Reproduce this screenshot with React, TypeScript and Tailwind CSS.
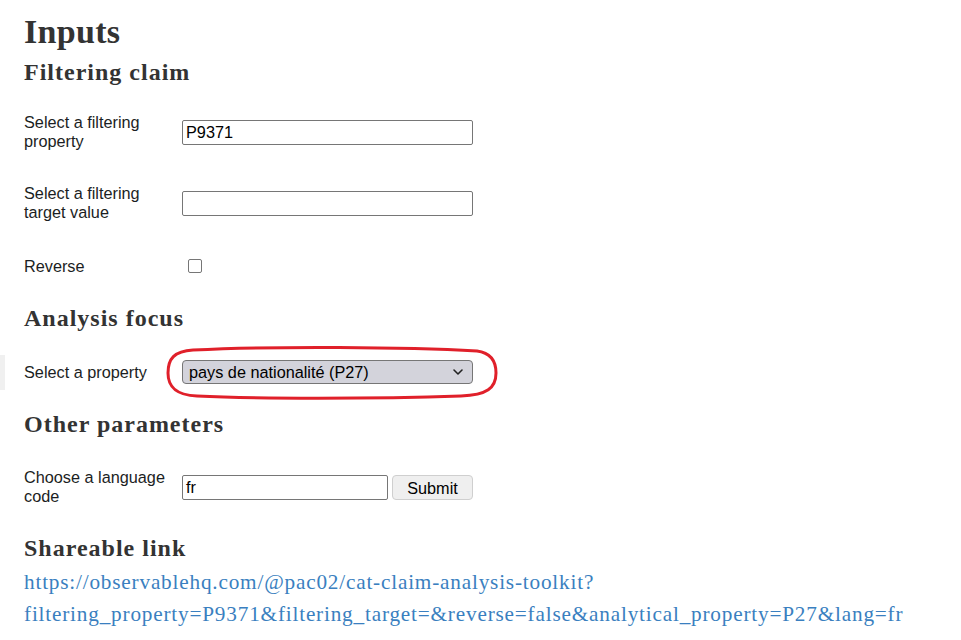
import React from 'react';

const serif = { fontFamily: "'Liberation Serif', 'DejaVu Serif', serif" };

function Row({ label, children, className = '' }: { label: string; children: React.ReactNode; className?: string }) {
  return (
    <div className={`relative flex items-center h-[40px] ${className}`}>
      <label className="w-[158px] pr-[8px] shrink-0 text-[16.25px] leading-[1.17] text-[#1b1e23]">{label}</label>
      {children}
    </div>
  );
}

export default function App() {
  return (
    <div
      className="min-h-screen bg-white pl-[24px] pt-[12px] text-[#333]"
      style={{ fontFamily: "'Liberation Sans', Arial, sans-serif" }}
    >
      <h1 className="text-[34px] leading-[40px] font-bold tracking-[0.3px]" style={serif}>Inputs</h1>

      <h2 className="mt-[5px] text-[24px] leading-[30px] font-bold tracking-[1px]" style={serif}>Filtering claim</h2>

      <Row label="Select a filtering property" className="mt-[25px]">
        <div className="w-[291px] h-[25px] border border-[#767676] rounded-[2px] flex items-center px-[3px] text-[16.25px] text-black">
          P9371
        </div>
      </Row>

      <Row label="Select a filtering target value" className="mt-[31px]">
        <div className="w-[291px] h-[25px] border border-[#767676] rounded-[2px]" />
      </Row>

      <Row label="Reverse" className="mt-[23px]">
        <div className="ml-[6px] w-[14px] h-[14px] border-[1.5px] border-[#767676] rounded-[2px] bg-white" />
      </Row>

      <h2 className="mt-[17px] text-[24px] leading-[30px] font-bold tracking-[1px]" style={serif}>Analysis focus</h2>

      <Row label="Select a property" className="mt-[19px]">
        <div className="absolute left-[-24px] top-[3px] h-[35px] w-[5px] bg-[#f0f0f0]" />
        <div className="relative w-[291px] h-[24px] border border-[#767676] rounded-[4px] bg-[#d3d3db] flex items-center justify-between pl-[6px] pr-[8px] text-[16.25px] text-black">
          <span>pays de nationalité (P27)</span>
          <svg width="12" height="8" viewBox="0 0 12 8" fill="none">
            <path d="M2 2l4 4 4-4" stroke="#222" strokeWidth="1.6" strokeLinecap="round" strokeLinejoin="round" />
          </svg>
        </div>
        <svg
          className="absolute left-[141px] top-[-8px]"
          width="334"
          height="56"
          viewBox="0 0 334 56"
          fill="none"
        >
          <path
            d="M28 6 C110 2 240 3 312 7 C327 9 331 18 331 29 C331 44 322 51 296 52 C210 55 90 55 32 52 C10 51 3 42 3 29 C3 15 9 7 28 6 Z"
            stroke="#e0202a"
            strokeWidth="3"
          />
        </svg>
      </Row>

      <h2 className="mt-[17px] text-[24px] leading-[30px] font-bold tracking-[1px]" style={serif}>Other parameters</h2>

      <Row label="Choose a language code" className="mt-[28px]">
        <div className="w-[206px] h-[25px] border border-[#767676] rounded-[2px] flex items-center px-[3px] text-[16.25px] text-black">
          fr
        </div>
        <button className="ml-[4px] w-[81px] h-[25px] border border-[#cfcfcf] rounded-[4px] bg-[#efefef] text-[16.25px] text-black">
          Submit
        </button>
      </Row>

      <h2 className="mt-[26px] text-[24px] leading-[30px] font-bold tracking-[1px]" style={serif}>Shareable link</h2>

      <a
        href="#"
        className="block mt-[3px] text-[21.25px] leading-[32px] text-[#3a7fc0] whitespace-nowrap tracking-[0.8px]"
        style={serif}
      >
        https://observablehq.com/@pac02/cat-claim-analysis-toolkit?
        <br />
        filtering_property=P9371&amp;filtering_target=&amp;reverse=false&amp;analytical_property=P27&amp;lang=fr
      </a>
    </div>
  );
}
